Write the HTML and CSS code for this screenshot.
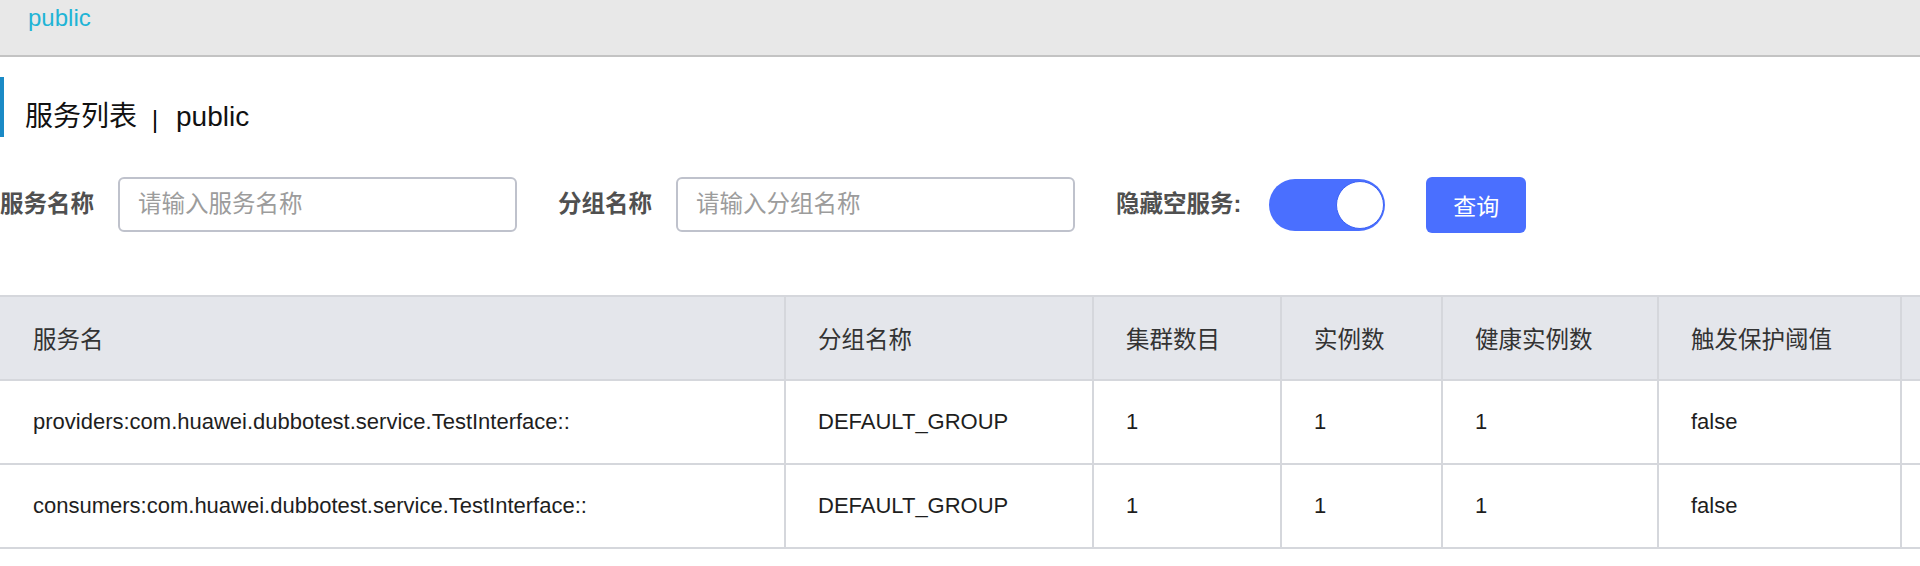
FILE: index.html
```html
<!DOCTYPE html>
<html lang="zh-CN">
<head>
<meta charset="utf-8">
<title>服务列表</title>
<link rel="stylesheet" href="styles.css">
</head>
<body>
<header class="topbar"><span class="ns">public</span></header>
<main class="content">
  <h1 class="title"><span>服务列表</span><span class="sep">|</span><span>public</span></h1>
  <form class="filters">
    <div class="field">
      <label class="label">服务名称</label>
      <input class="input" type="text" placeholder="请输入服务名称">
    </div>
    <div class="field">
      <label class="label">分组名称</label>
      <input class="input" type="text" placeholder="请输入分组名称">
    </div>
    <div class="field field-switch">
      <label class="label">隐藏空服务:</label>
      <span class="switch"><span class="knob"></span></span>
    </div>
    <button class="btn" type="button">查询</button>
  </form>
  <div class="grid">
    <div class="cell head">服务名</div>
    <div class="cell head">分组名称</div>
    <div class="cell head">集群数目</div>
    <div class="cell head">实例数</div>
    <div class="cell head">健康实例数</div>
    <div class="cell head">触发保护阈值</div>
    <div class="cell head"></div>

    <div class="cell">providers:com.huawei.dubbotest.service.TestInterface::</div>
    <div class="cell">DEFAULT_GROUP</div>
    <div class="cell">1</div>
    <div class="cell">1</div>
    <div class="cell">1</div>
    <div class="cell">false</div>
    <div class="cell"></div>

    <div class="cell">consumers:com.huawei.dubbotest.service.TestInterface::</div>
    <div class="cell">DEFAULT_GROUP</div>
    <div class="cell">1</div>
    <div class="cell">1</div>
    <div class="cell">1</div>
    <div class="cell">false</div>
    <div class="cell"></div>
  </div>
</main>
</body>
</html>
```

FILE: styles.css
```css
* { box-sizing: border-box; }
html, body {
  margin: 0;
  padding: 0;
  background: #fff;
  overflow: hidden;
}
body {
  font-family: "Liberation Sans", "Noto Sans CJK SC", sans-serif;
  color: #222;
}
.topbar {
  height: 57px;
  background: #e8e8e8;
  border-bottom: 2px solid #c3c3c3;
  padding-left: 28px;
  line-height: 36px;
}
.ns {
  font-size: 24px;
  color: #1fb4d6;
}
.content {
  padding-top: 20px;
}
.title {
  margin: 0;
  height: 60px;
  border-left: 4px solid #1a8ac6;
  padding: 26px 0 0 21px;
  font-size: 28px;
  line-height: 28px;
  font-weight: normal;
  color: #111;
}
.sep {
  font-size: 23px;
  margin: 0 18px 0 15px;
  vertical-align: -2px;
  color: #000;
}
.filters {
  display: flex;
  align-items: flex-start;
  margin-top: 40px;
}
.field {
  display: flex;
  align-items: center;
  gap: 24px;
  margin-right: 41px;
}
.field-switch { gap: 28px; }
.label {
  font-size: 23.5px;
  font-weight: bold;
  color: #505050;
  line-height: 55px;
  white-space: nowrap;
}
.input {
  width: 399px;
  height: 55px;
  border: 2px solid #bfc2cc;
  border-radius: 6px;
  padding: 0 18px;
  font-family: "Liberation Sans", "Noto Sans CJK SC", sans-serif;
  font-size: 23.5px;
  color: #333;
  outline: none;
}
.input::placeholder { color: #9c9c9c; }
.switch {
  display: flex;
  justify-content: flex-end;
  align-items: center;
  width: 116px;
  height: 52px;
  padding: 2px 1px;
  border-radius: 26px;
  background: #4a6fff;
}
.knob {
  width: 48px;
  height: 48px;
  border-radius: 50%;
  background: #fff;
  border: 1px solid #3c62f5;
}
.btn {
  width: 100px;
  height: 56px;
  border: 0;
  border-radius: 6px;
  background: #4a6fff;
  color: #fff;
  font-family: "Liberation Sans", "Noto Sans CJK SC", sans-serif;
  font-size: 23px;
  padding: 0;
}
.grid {
  margin-top: 62px;
  display: grid;
  grid-template-columns: 786px 308px 188px 161px 216px 243px 1fr;
  border-top: 2px solid #d5d7dc;
}
.cell {
  height: 84px;
  display: flex;
  align-items: center;
  padding-left: 32px;
  border-right: 2px solid #d5d7dc;
  border-bottom: 2px solid #d5d7dc;
  font-size: 22px;
  color: #1e1e1e;
  white-space: nowrap;
}
.cell:nth-child(7n+1) { padding-left: 33px; }
.head {
  background: #e4e6eb;
  color: #333;
  font-size: 23.5px;
}
```
